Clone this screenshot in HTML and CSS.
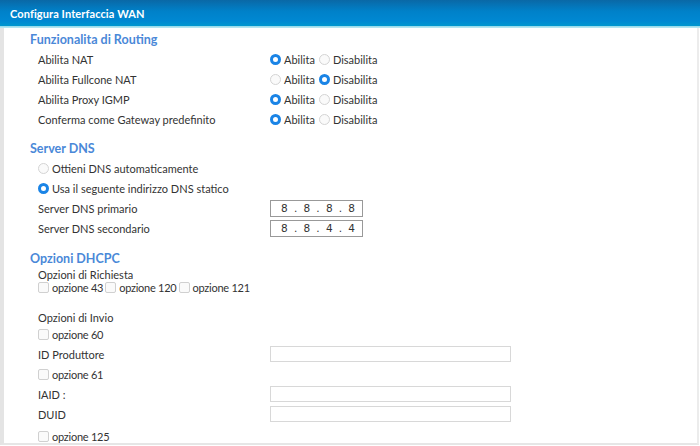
FILE: index.html
```html
<!DOCTYPE html>
<html>
<head>
<meta charset="utf-8">
<link rel="stylesheet" href="styles.css">
</head>
<body>
<div class="header">Configura Interfaccia WAN</div>
<div class="panel">
  <h2 class="title">Funzionalita di Routing</h2>
  <div class="row"><span class="label">Abilita NAT</span>
    <span class="opts"><span class="radio on"></span><span class="opt">Abilita</span><span class="radio"></span><span class="opt">Disabilita</span></span></div>
  <div class="row"><span class="label">Abilita Fullcone NAT</span>
    <span class="opts"><span class="radio"></span><span class="opt">Abilita</span><span class="radio on"></span><span class="opt">Disabilita</span></span></div>
  <div class="row"><span class="label">Abilita Proxy IGMP</span>
    <span class="opts"><span class="radio on"></span><span class="opt">Abilita</span><span class="radio"></span><span class="opt">Disabilita</span></span></div>
  <div class="row"><span class="label">Conferma come Gateway predefinito</span>
    <span class="opts"><span class="radio on"></span><span class="opt">Abilita</span><span class="radio"></span><span class="opt">Disabilita</span></span></div>

  <h2 class="title t2">Server DNS</h2>
  <div class="row"><span class="radio"></span><span class="opt">Ottieni DNS automaticamente</span></div>
  <div class="row"><span class="radio on"></span><span class="opt">Usa il seguente indirizzo DNS statico</span></div>
  <div class="row"><span class="label">Server DNS primario</span>
    <span class="ip"><span>8</span><span>.</span><span>8</span><span>.</span><span>8</span><span>.</span><span>8</span></span></div>
  <div class="row"><span class="label">Server DNS secondario</span>
    <span class="ip"><span>8</span><span>.</span><span>8</span><span>.</span><span>4</span><span>.</span><span>4</span></span></div>

  <h2 class="title t3">Opzioni DHCPC</h2>
  <div class="sub">Opzioni di Richiesta</div>
  <div class="row cb-row tight"><span class="cb"></span><span class="opt">opzione 43</span><span class="cb"></span><span class="opt">opzione 120</span><span class="cb"></span><span class="opt">opzione 121</span></div>
  <div class="sub s2">Opzioni di Invio</div>
  <div class="row cb-row"><span class="cb"></span><span class="opt">opzione 60</span></div>
  <div class="row"><span class="label">ID Produttore</span><span class="text"></span></div>
  <div class="row cb-row"><span class="cb"></span><span class="opt">opzione 61</span></div>
  <div class="row"><span class="label">IAID :</span><span class="text"></span></div>
  <div class="row"><span class="label">DUID</span><span class="text"></span></div>
  <div class="row cb-row last"><span class="cb"></span><span class="opt">opzione 125</span></div>
</div>
</body>
</html>
```
FILE: styles.css
```css
* { box-sizing: border-box; }
html, body { margin: 0; padding: 0; background: #fff; }
body {
  font-family: Lato, "Liberation Sans", sans-serif;
  font-size: 11px;
  color: #333;
  width: 700px;
  height: 446px;
  overflow: hidden;
}
.header {
  height: 28px;
  background: linear-gradient(#0a68a6 0%, #0081c9 40%, #0088d2 75%, #0096cf 92%, #8fd8ea 93%, #bfe9f2 100%);
  color: #fff;
  font-weight: bold;
  font-size: 11px;
  padding: 7px 0 0 10px;
  letter-spacing: 0.1px;
}
.panel {
  border-left: 4px solid #e4e4e4;
  border-right: 2px solid #ececec;
  border-bottom: 2px solid #e6e6e6;
  margin-right: 1px;
  height: 417px;
  padding: 3px 0 0 26px;
}
.title {
  margin: 0;
  font-size: 12.5px;
  font-weight: bold;
  color: #4a88d8;
  height: 18px;
  line-height: 18px;
}
.t2 { margin-top: 11px; }
.t3 { margin-top: 12px; }
.row {
  display: flex;
  align-items: center;
  height: 20px;
  padding-left: 8px;
}
.row.tight { height: 12px; margin-top: 0; }
.row.last { margin-top: 2px; }
.label { width: 232px; flex: none; }
.opts { display: flex; align-items: center; }
.radio {
  width: 11px; height: 11px;
  border-radius: 50%;
  border: 1px solid #d4d4d4;
  background: #fafafa;
  flex: none;
  margin-right: 3px;
}
.radio.on {
  border: 3.5px solid #1a84e6;
  background: #fff;
}
.opts .opt { margin-right: 4px; }
.cb {
  width: 11px; height: 11px;
  border: 1px solid #d0d0d0;
  border-radius: 2px;
  background: #fafafa;
  flex: none;
  margin-right: 3px;
}
.cb-row .opt { margin-right: 2px; letter-spacing: -0.25px; }
.ip {
  width: 93px; height: 17px;
  border: 1px solid #999;
  display: flex;
  justify-content: space-between;
  align-items: center;
  padding: 0 7px 0 10px;
  font-family: "DejaVu Sans", sans-serif;
  font-size: 10.5px;
  color: #333;
}
.text {
  width: 241px; height: 16px;
  border: 1px solid #d8d8d8;
}
.sub { height: 13px; line-height: 13px; padding-left: 8px; }
.s2 { margin-top: 18px; }
```
